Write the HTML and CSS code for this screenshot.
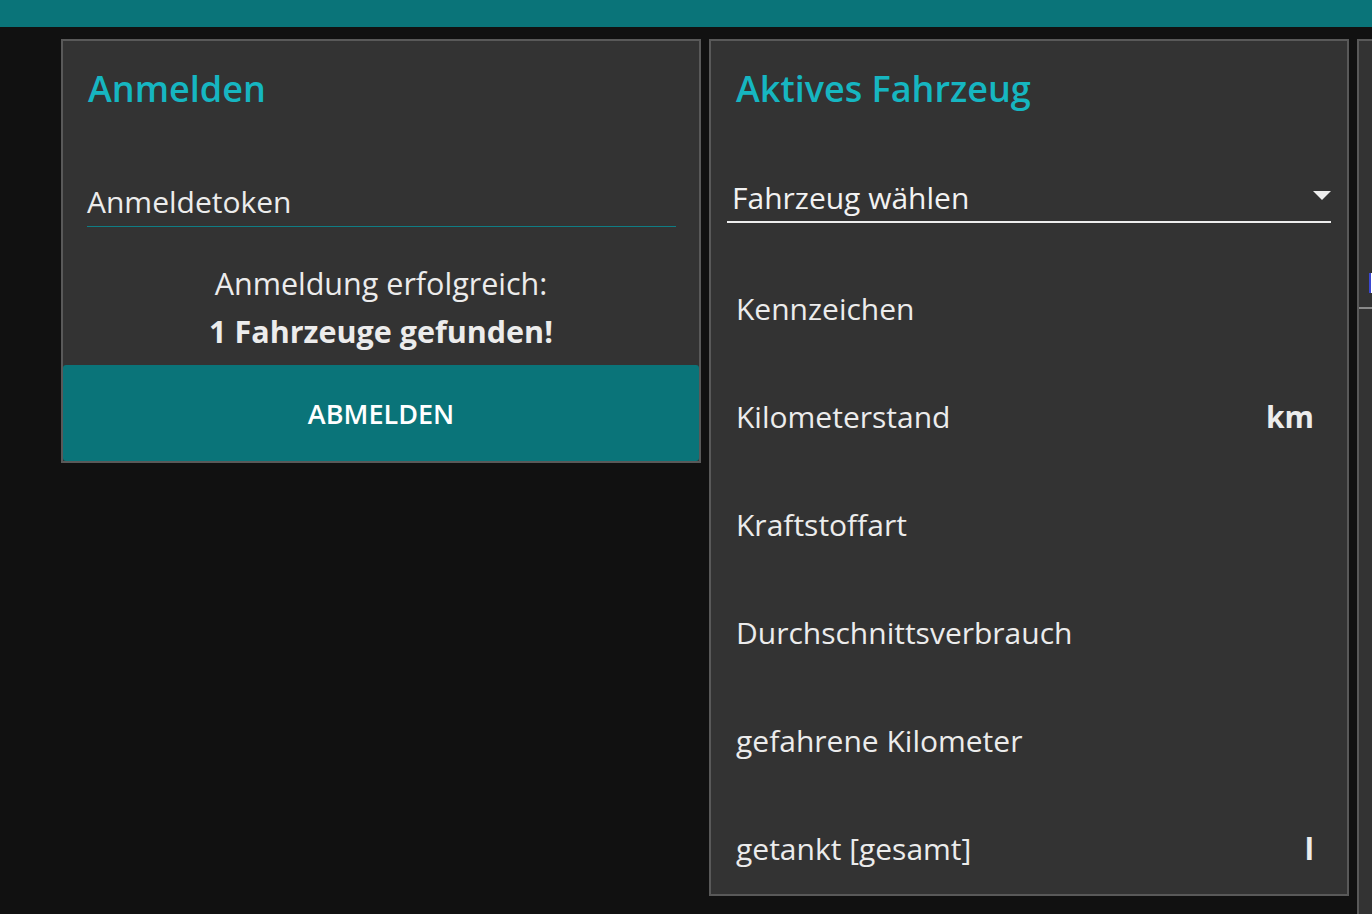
FILE: index.html
```html
<!DOCTYPE html>
<html lang="de">
<head>
    <meta charset="UTF-8">
    <meta name="viewport" content="width=device-width, initial-scale=1.0">
    <link rel="stylesheet" href="styles.css">
</head>
<body>
<div class="topbar"></div>
<div class="cards">
    <div class="card">
        <h2 class="card-title">Anmelden</h2>
        <div class="token-field">Anmeldetoken</div>
        <div class="status">
            <div>Anmeldung erfolgreich:</div>
            <div class="status-strong">1 Fahrzeuge gefunden!</div>
        </div>
        <button class="logout-button">ABMELDEN</button>
    </div>

    <div class="card">
        <h2 class="card-title">Aktives Fahrzeug</h2>
        <div class="vehicle-select">
            <span>Fahrzeug wählen</span>
            <span class="select-arrow"></span>
        </div>
        <div class="info-list">
            <div class="info-row"><span>Kennzeichen</span></div>
            <div class="info-row"><span>Kilometerstand</span><span class="unit">km</span></div>
            <div class="info-row"><span>Kraftstoffart</span></div>
            <div class="info-row"><span>Durchschnittsverbrauch</span></div>
            <div class="info-row"><span>gefahrene Kilometer</span></div>
            <div class="info-row"><span>getankt [gesamt]</span><span class="unit">l</span></div>
        </div>
    </div>

    <div class="card card-tall">
        <div class="edit-field"><span class="caret-block"></span></div>
    </div>
</div>
</body>
</html>
```

FILE: styles.css
```css
body {
    font-family: "Open Sans", "Noto Sans", sans-serif;
    margin: 0;
    height: 100vh;
    overflow: hidden;
    background-color: #111111;
    color: #ececec;
}

.topbar {
    height: 27px;
    background-color: #0a7479;
}

.cards {
    display: flex;
    align-items: flex-start;
    gap: 8px;
    padding: 12px 0 0 61px;
    overflow: hidden;
}

.card {
    flex: 0 0 640px;
    box-sizing: border-box;
    border: 2px solid #595959;
    background-color: #333333;
    display: flex;
    flex-direction: column;
}

.card-tall {
    height: 900px;
}

.card-title {
    margin: 23px 25px 0;
    font-size: 36px;
    font-weight: 600;
    line-height: 50px;
    color: #16b6c1;
}

.token-field {
    margin: 68px 23px 0 24px;
    padding-bottom: 4px;
    font-size: 30px;
    line-height: 40px;
    border-bottom: 1px solid #0f7d84;
}

.status {
    margin-top: 32px;
    text-align: center;
    font-size: 30.5px;
    line-height: 48px;
}

.status-strong {
    font-weight: 700;
    font-size: 30.5px;
}

.logout-button {
    margin-top: 10px;
    height: 96px;
    border: none;
    border-radius: 3px;
    background-color: #0a7479;
    color: #ffffff;
    font-family: inherit;
    font-size: 27px;
    font-weight: 600;
}

.vehicle-select {
    margin: 64px 16px 0;
    padding: 0 0 3px 5px;
    display: flex;
    justify-content: space-between;
    align-items: center;
    font-size: 30px;
    line-height: 40px;
    color: #f2f2f2;
    border-bottom: 2px solid #eeeeee;
}

.select-arrow {
    width: 0;
    height: 0;
    margin-top: -6px;
    border-left: 9px solid transparent;
    border-right: 9px solid transparent;
    border-top: 9px solid #eeeeee;
}

.info-list {
    margin-top: 39px;
    display: flex;
    flex-direction: column;
    gap: 16px;
}

.info-row {
    height: 92px;
    padding: 0 33px 0 25px;
    display: flex;
    justify-content: space-between;
    align-items: center;
    font-size: 30px;
}

.unit {
    font-weight: 700;
}

.edit-field {
    margin-top: 232px;
    padding: 0 0 14px 10px;
    border-bottom: 2px solid #8a8a8a;
}

.caret-block {
    display: block;
    width: 30px;
    height: 20px;
    background-color: #ffffff;
    border-left: 2px solid #3a47d1;
}
```
